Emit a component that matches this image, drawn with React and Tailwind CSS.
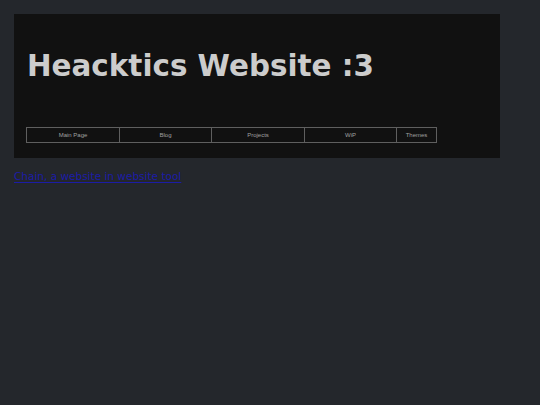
export default function App() {
  const items = [
    ["Main Page", "w-[94px]"],
    ["Blog", "w-[93px]"],
    ["Projects", "w-[94px]"],
    ["WiP", "w-[93px]"],
    ["Themes", "w-[41px]"],
  ];
  return (
    <div className="min-h-[405px] w-full bg-[#24272c] pt-[14px] px-[14px]" style={{ fontFamily: '"Liberation Sans", Arial, sans-serif' }}>
      <div className="w-[486px] h-[144px] bg-[#111111] flex flex-col px-[12px]">
        <h1 className="mt-[32px] ml-[1px] text-[29.4px] leading-[40px] font-bold text-[#cccccc]" style={{ fontFamily: '"DejaVu Sans", Verdana, sans-serif' }}>
          Heacktics Website :3
        </h1>
        <div className="mt-[41px] flex">
          {items.map(([t, w], i) => (
            <div key={t} className={`${w} h-[16px] border border-[#5f5f5f] flex items-center justify-center text-[6px] text-[#a0a0a0] ${i > 0 ? "-ml-px" : ""}`}>
              {t}
            </div>
          ))}
        </div>
      </div>
      <a href="#" className="block mt-[11px] text-[10.5px] leading-[14px] text-[#1c1ca6] underline decoration-1 underline-offset-2" style={{ fontFamily: '"DejaVu Sans", Verdana, sans-serif' }}>
        Chain, a website in website tool
      </a>
    </div>
  );
}
